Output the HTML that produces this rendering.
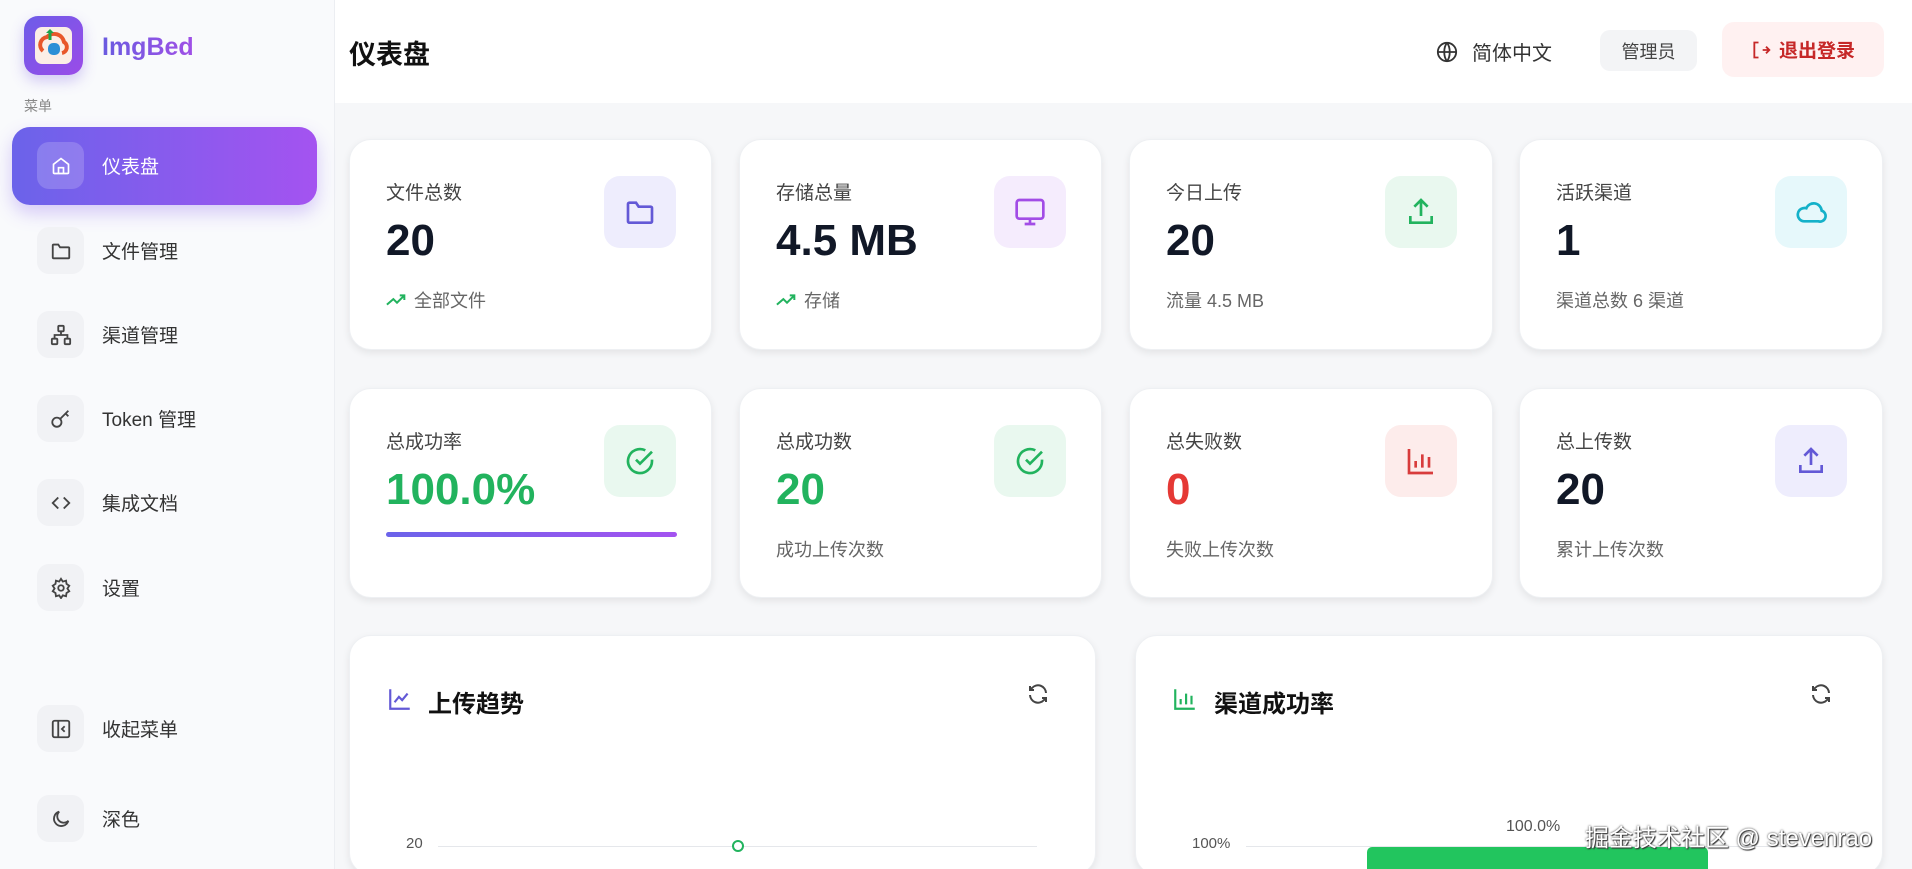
<!DOCTYPE html>
<html style="width:1912px;height:869px;overflow:hidden"><head><meta charset="utf-8"><style>
*{box-sizing:border-box;margin:0;padding:0}
body{width:1912px;height:869px;overflow:hidden;background:#f6f7f9;font-family:"Liberation Sans","Noto Sans CJK SC",sans-serif;position:relative;color:#1f2937}
.abs{position:absolute}
.side{left:0;top:0;width:335px;height:869px;background:#f9fafc;border-right:1px solid #eceef2}
.logo{left:24px;top:16px;width:59px;height:59px;border-radius:14px;background:linear-gradient(135deg,#6d5ce8,#9b4be8);box-shadow:0 6px 14px rgba(120,90,230,.3)}
.logo i{position:absolute;left:11px;top:11px;width:37px;height:37px;border-radius:7px;background:#fbeee6}
.brand{left:102px;top:33px;font-size:25px;font-weight:bold;background:linear-gradient(90deg,#6a5be0,#a04fe6);-webkit-background-clip:text;color:transparent}
.menu-lbl{left:24px;top:96px;font-size:14px;color:#888}
.active{left:12px;top:127px;width:305px;height:78px;border-radius:18px;background:linear-gradient(90deg,#6b63ea,#a453f0);box-shadow:0 8px 18px rgba(130,90,240,.3)}
.ib{position:absolute;width:47px;height:47px;border-radius:12px;background:#f1f2f5;display:flex;align-items:center;justify-content:center}
.mi{position:absolute;left:37px;height:47px;display:flex;align-items:center}
.mi span{position:absolute;left:65px;font-size:19px;color:#333;white-space:nowrap}
.header{left:335px;top:0;width:1577px;height:103px;background:#fff}
.card{position:absolute;background:#fff;border-radius:22px;box-shadow:0 3px 8px rgba(0,0,0,.08);border:1px solid #eef0f3}
.lab{position:absolute;left:36px;top:38px;font-size:19px;color:#444}
.val{position:absolute;left:36px;top:76px;font-size:44px;font-weight:bold;color:#111827}
.sub{position:absolute;left:36px;top:147px;font-size:18px;color:#666;display:flex;align-items:center;gap:6px}
.ic{position:absolute;right:35px;top:36px;width:72px;height:72px;border-radius:16px;display:flex;align-items:center;justify-content:center}
svg{display:block}
</style></head><body>
<div class="abs side"></div>
<div class="abs logo"><i></i>
<svg class="abs" style="left:13px;top:13px" width="33" height="33" viewBox="0 0 33 33"><path d="M6 22a8 8 0 0 1 4-14 10 10 0 0 1 17 5 6 6 0 0 1-2 11" fill="none" stroke="#e8572a" stroke-width="4"/><path d="M9 4l4-4 4 4z" fill="#1fa34a"/><rect x="11.5" y="3" width="3" height="8" fill="#1fa34a"/><rect x="11" y="14" width="12" height="12" rx="5" fill="#2b8fd6"/></svg></div>
<div class="abs brand">ImgBed</div>
<div class="abs menu-lbl">菜单</div>
<div class="abs active"></div>
<div class="mi" style="top:142px"><div class="ib" style="position:relative;background:rgba(255,255,255,.18)"><svg width="20" height="20" viewBox="0 0 24 24" fill="none" stroke="#fff" stroke-width="2"><path d="M3 10l9-7 9 7v10a1 1 0 0 1-1 1H4a1 1 0 0 1-1-1z"/><path d="M9 21v-7h6v7"/></svg></div><span style="color:#fff">仪表盘</span></div>
<div class="mi" style="top:227px"><div class="ib" style="position:relative"><svg width="22" height="22" viewBox="0 0 24 24" fill="none" stroke="#444" stroke-width="2"><path d="M3 6a1 1 0 0 1 1-1h5l2 3h9a1 1 0 0 1 1 1v10a1 1 0 0 1-1 1H4a1 1 0 0 1-1-1z"/></svg></div><span>文件管理</span></div>
<div class="mi" style="top:311px"><div class="ib" style="position:relative"><svg width="22" height="22" viewBox="0 0 24 24" fill="none" stroke="#444" stroke-width="2"><rect x="9" y="2" width="6" height="6" rx="1"/><rect x="2" y="16" width="6" height="6" rx="1"/><rect x="16" y="16" width="6" height="6" rx="1"/><path d="M5 16v-4h14v4M12 8v4"/></svg></div><span>渠道管理</span></div>
<div class="mi" style="top:395px"><div class="ib" style="position:relative"><svg width="22" height="22" viewBox="0 0 24 24" fill="none" stroke="#444" stroke-width="2"><circle cx="7.5" cy="15.5" r="5"/><path d="M11 12l9-9M17 6l3 3"/></svg></div><span>Token 管理</span></div>
<div class="mi" style="top:479px"><div class="ib" style="position:relative"><svg width="22" height="22" viewBox="0 0 24 24" fill="none" stroke="#444" stroke-width="2"><path d="M9 6l-6 6 6 6M15 6l6 6-6 6"/></svg></div><span>集成文档</span></div>
<div class="mi" style="top:564px"><div class="ib" style="position:relative"><svg width="22" height="22" viewBox="0 0 24 24" fill="none" stroke="#444" stroke-width="2"><circle cx="12" cy="12" r="3"/><path d="M12 2l2 3 3.5-1 .5 3.5 3 2-2 3 2 3-3 2-.5 3.5-3.5-1-2 3-2-3-3.5 1-.5-3.5-3-2 2-3-2-3 3-2L6.5 4 10 5z"/></svg></div><span>设置</span></div>
<div class="mi" style="top:705px"><div class="ib" style="position:relative"><svg width="22" height="22" viewBox="0 0 24 24" fill="none" stroke="#444" stroke-width="2"><rect x="3" y="3" width="18" height="18" rx="2"/><path d="M9 3v18M16 9l-3 3 3 3"/></svg></div><span>收起菜单</span></div>
<div class="mi" style="top:795px"><div class="ib" style="position:relative"><svg width="22" height="22" viewBox="0 0 24 24" fill="none" stroke="#444" stroke-width="2"><path d="M20 14A8 8 0 1 1 10 4a6 6 0 0 0 10 10z"/></svg></div><span>深色</span></div>

<div class="abs header"></div>
<div class="abs" style="left:349px;top:33px;font-size:27px;font-weight:bold;color:#111">仪表盘</div>
<div class="abs" style="left:1436px;top:37px;display:flex;align-items:center;gap:14px;font-size:20px;color:#333"><svg width="22" height="22" viewBox="0 0 24 24" fill="none" stroke="#333" stroke-width="2"><circle cx="12" cy="12" r="10"/><path d="M2 12h20M12 2c-4 5-4 15 0 20M12 2c4 5 4 15 0 20"/></svg>简体中文</div>
<div class="abs" style="left:1600px;top:30px;width:97px;height:41px;border-radius:10px;background:#f3f4f6;font-size:18px;color:#444;display:flex;align-items:center;justify-content:center">管理员</div>
<div class="abs" style="left:1722px;top:22px;width:162px;height:55px;border-radius:12px;background:#fff1f1;font-size:19px;color:#c62828;font-weight:bold;display:flex;align-items:center;justify-content:center;gap:8px"><svg width="20" height="20" viewBox="0 0 24 24" fill="none" stroke="#c62828" stroke-width="2.2"><path d="M9 3H4v18h5M14 12h8M18 8l4 4-4 4"/></svg>退出登录</div>

<div class="card" style="left:349px;top:139px;width:363px;height:211px"><div class="lab">文件总数</div><div class="val">20</div><div class="sub"><svg width="22" height="16" viewBox="0 0 24 16" fill="none" stroke="#22b35e" stroke-width="2.2"><path d="M1 13l7-6 4 4 8-8M15 3h5v5"/></svg>全部文件</div><div class="ic" style="background:#eeedfd"><svg width="32" height="32" viewBox="0 0 24 24" fill="none" stroke="#6359d6" stroke-width="2"><path d="M3 6a1 1 0 0 1 1-1h5l2 3h9a1 1 0 0 1 1 1v10a1 1 0 0 1-1 1H4a1 1 0 0 1-1-1z"/></svg></div></div>
<div class="card" style="left:739px;top:139px;width:363px;height:211px"><div class="lab">存储总量</div><div class="val">4.5 MB</div><div class="sub"><svg width="22" height="16" viewBox="0 0 24 16" fill="none" stroke="#22b35e" stroke-width="2.2"><path d="M1 13l7-6 4 4 8-8M15 3h5v5"/></svg>存储</div><div class="ic" style="background:#f5ecfd"><svg width="32" height="32" viewBox="0 0 24 24" fill="none" stroke="#a24ce6" stroke-width="2"><rect x="2" y="3" width="20" height="14" rx="2"/><path d="M8 21h8M12 17v4"/></svg></div></div>
<div class="card" style="left:1129px;top:139px;width:364px;height:211px"><div class="lab">今日上传</div><div class="val">20</div><div class="sub">流量 4.5 MB</div><div class="ic" style="background:#e9f8ef"><svg width="32" height="32" viewBox="0 0 24 24" fill="none" stroke="#22b35e" stroke-width="2"><path d="M4 15v5h16v-5M12 3v12M7 8l5-5 5 5"/></svg></div></div>
<div class="card" style="left:1519px;top:139px;width:364px;height:211px"><div class="lab">活跃渠道</div><div class="val">1</div><div class="sub">渠道总数 6 渠道</div><div class="ic" style="background:#e6f8fb"><svg width="32" height="32" viewBox="0 0 24 24" fill="none" stroke="#14b1c9" stroke-width="2"><path d="M17.5 19H7a5 5 0 1 1 1.5-9.8A6 6 0 0 1 20 11a4 4 0 0 1-2.5 8z"/></svg></div></div>

<div class="card" style="left:349px;top:388px;width:363px;height:210px"><div class="lab">总成功率</div><div class="val" style="color:#22b35e">100.0%</div><div class="abs" style="left:36px;top:143px;width:291px;height:5px;border-radius:3px;background:linear-gradient(90deg,#6b63ea,#a453f0)"></div><div class="ic" style="background:#e9f8ef"><svg width="32" height="32" viewBox="0 0 24 24" fill="none" stroke="#22b35e" stroke-width="2"><path d="M21 11v1a9 9 0 1 1-5-8"/><path d="M9 11l3 3 9-9"/></svg></div></div>
<div class="card" style="left:739px;top:388px;width:363px;height:210px"><div class="lab">总成功数</div><div class="val" style="color:#22b35e">20</div><div class="sub">成功上传次数</div><div class="ic" style="background:#e9f8ef"><svg width="32" height="32" viewBox="0 0 24 24" fill="none" stroke="#22b35e" stroke-width="2"><path d="M21 11v1a9 9 0 1 1-5-8"/><path d="M9 11l3 3 9-9"/></svg></div></div>
<div class="card" style="left:1129px;top:388px;width:364px;height:210px"><div class="lab">总失败数</div><div class="val" style="color:#e53935">0</div><div class="sub">失败上传次数</div><div class="ic" style="background:#fdeceb"><svg width="32" height="32" viewBox="0 0 24 24" fill="none" stroke="#d83c3c" stroke-width="2"><path d="M3 3v18h18M8 17v-5M13 17V7M18 17v-8"/></svg></div></div>
<div class="card" style="left:1519px;top:388px;width:364px;height:210px"><div class="lab">总上传数</div><div class="val">20</div><div class="sub">累计上传次数</div><div class="ic" style="background:#eeedfd"><svg width="32" height="32" viewBox="0 0 24 24" fill="none" stroke="#6359d6" stroke-width="2"><path d="M4 15v5h16v-5M12 3v12M7 8l5-5 5 5"/></svg></div></div>

<div class="card" style="left:349px;top:635px;width:747px;height:240px">
<svg class="abs" style="left:37px;top:50px" width="26" height="26" viewBox="0 0 24 24" fill="none" stroke="#6359d6" stroke-width="2"><path d="M3 3v18h18M7 15l4-5 3 3 5-6"/></svg>
<div class="abs" style="left:78px;top:48px;font-size:24px;font-weight:bold;color:#111">上传趋势</div>
<svg class="abs" style="left:676px;top:46px" width="24" height="24" viewBox="0 0 24 24" fill="none" stroke="#444" stroke-width="2"><path d="M20 11a8 8 0 0 0-14-5l-2 2M4 4v4h4M4 13a8 8 0 0 0 14 5l2-2M20 20v-4h-4"/></svg>
<div class="abs" style="left:56px;top:199px;font-size:15px;color:#555">20</div>
<div class="abs" style="left:88px;top:210px;width:599px;height:1px;background:#e5e7eb"></div>
<div class="abs" style="left:382px;top:204px;width:12px;height:12px;border-radius:50%;border:2.5px solid #22b35e;background:#fff"></div>
</div>
<div class="card" style="left:1135px;top:635px;width:748px;height:240px">
<svg class="abs" style="left:36px;top:50px" width="26" height="26" viewBox="0 0 24 24" fill="none" stroke="#22b35e" stroke-width="2"><path d="M3 3v18h18M8 17v-5M13 17V7M18 17v-8"/></svg>
<div class="abs" style="left:78px;top:48px;font-size:24px;font-weight:bold;color:#111">渠道成功率</div>
<svg class="abs" style="left:673px;top:46px" width="24" height="24" viewBox="0 0 24 24" fill="none" stroke="#444" stroke-width="2"><path d="M20 11a8 8 0 0 0-14-5l-2 2M4 4v4h4M4 13a8 8 0 0 0 14 5l2-2M20 20v-4h-4"/></svg>
<div class="abs" style="left:56px;top:199px;font-size:15px;color:#555">100%</div>
<div class="abs" style="left:110px;top:210px;width:570px;height:1px;background:#e5e7eb"></div>
<div class="abs" style="left:231px;top:211px;width:341px;height:40px;border-radius:5px 5px 0 0;background:#22c55e"></div>
<div class="abs" style="left:370px;top:182px;font-size:16px;color:#555">100.0%</div>
</div>
<div class="abs" style="left:1585px;top:818px;font-size:24px;color:#fff;text-shadow:0 0 2px #333,1px 1px 1px #333;white-space:nowrap">掘金技术社区 @ stevenrao</div>
</body></html>
